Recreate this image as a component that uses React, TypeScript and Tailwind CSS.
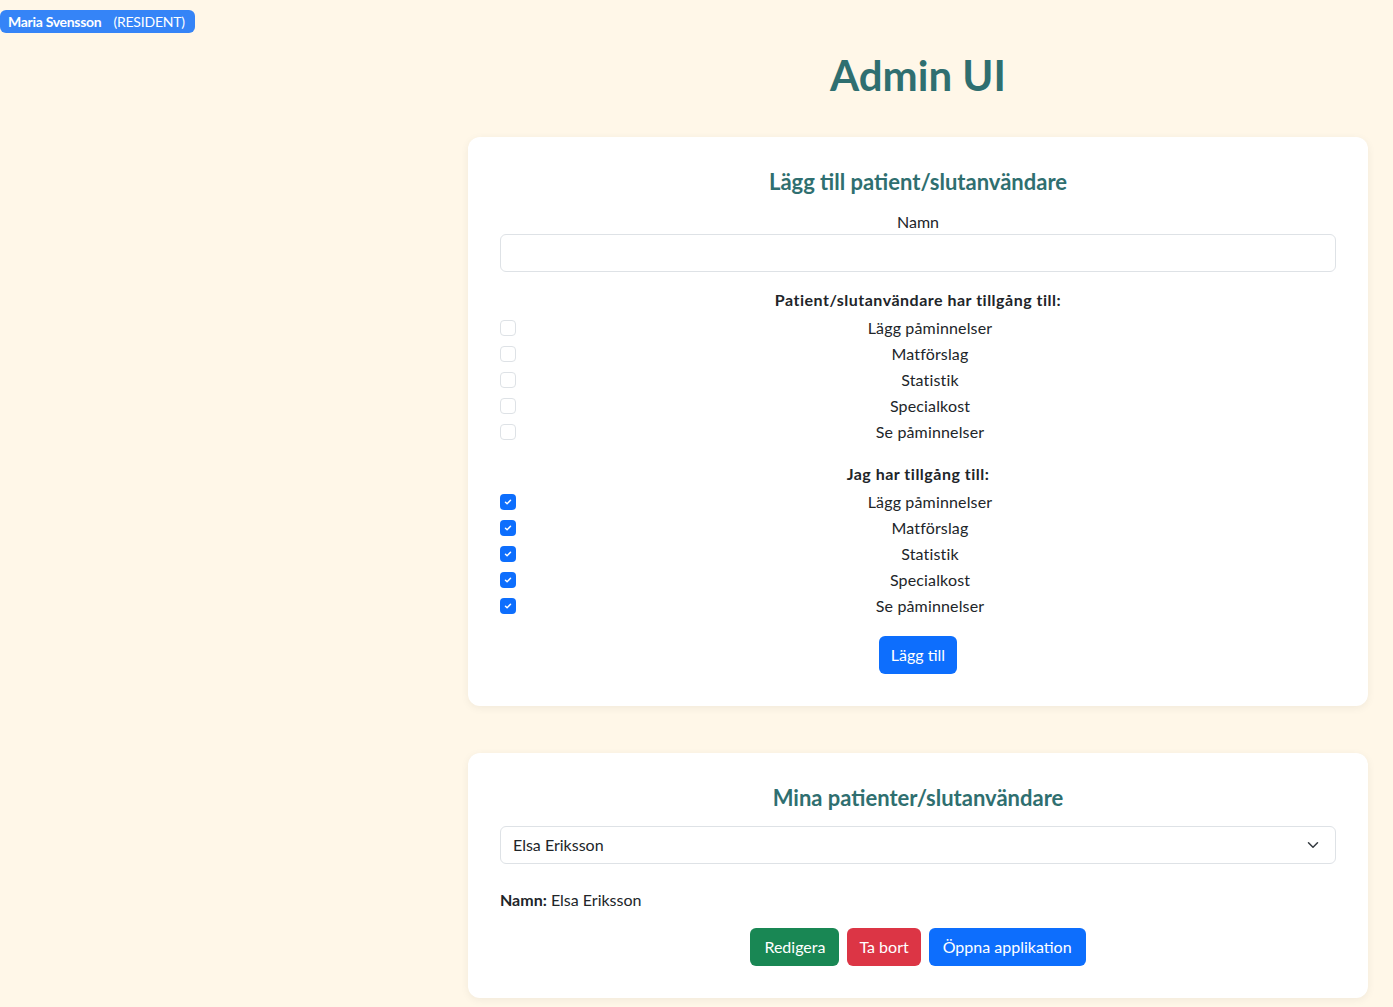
import React from 'react';

const features = ['Lägg påminnelser', 'Matförslag', 'Statistik', 'Specialkost', 'Se påminnelser'];

function Check({ checked }: { checked: boolean }) {
  if (!checked) {
    return <span className="w-4 h-4 shrink-0 rounded-[4px] border border-[#dee2e6] bg-white" />;
  }
  return (
    <span className="w-4 h-4 shrink-0 rounded-[4px] bg-[#0d6efd] flex items-center justify-center">
      <svg width="10" height="10" viewBox="0 0 20 20" fill="none">
        <path d="M5 10.5l3.2 3L15 6.5" stroke="#fff" strokeWidth="3" strokeLinecap="round" strokeLinejoin="round" />
      </svg>
    </span>
  );
}

function FeatureList({ checked }: { checked: boolean }) {
  return (
    <div className="flex flex-col">
      {features.map((f) => (
        <label key={f} className="h-[26px] flex items-center">
          <Check checked={checked} />
          <span className="flex-1 ml-2 text-center tracking-[0.15px]">{f}</span>
        </label>
      ))}
    </div>
  );
}

export default function App() {
  return (
    <div className="min-h-screen bg-[#fff7e8] flex text-[16px] leading-6 text-[#212529] font-['Lato','Liberation_Sans',sans-serif]">
      {/* sidomeny */}
      <div className="w-[443px] shrink-0 pt-[10px] flex flex-col items-start">
        <div className="flex items-center gap-[12px] h-[23px] pl-2 pr-[10px] rounded-[6px] bg-[#3584f7] text-white text-[14px]">
          <span className="font-bold tracking-[-0.3px]">Maria Svensson</span>
          <span className="tracking-[-0.2px]">(RESIDENT)</span>
        </div>
      </div>

      <main className="flex-1 px-[25px] pt-[48px] pb-[9px]">
        <h1 className="text-center text-[42px] leading-[54px] font-bold text-[#2f6f70] mb-[35px]">Admin UI</h1>

        <section className="bg-white rounded-[12px] shadow-[0_2px_8px_rgba(0,0,0,0.06)] px-8 pt-[30px] pb-8 flex flex-col">
          <h3 className="text-center text-[22px] leading-[29px] font-bold text-[#2f6f70]">Lägg till patient/slutanvändare</h3>
          <div className="text-center mt-[14px]">Namn</div>
          <input className="h-[38px] w-full rounded-[6px] border border-[#dee2e6] px-3 outline-none" />

          <div className="text-center font-bold tracking-[0.5px] mt-4 mb-[3px]">Patient/slutanvändare har tillgång till:</div>
          <FeatureList checked={false} />

          <div className="text-center font-bold tracking-[0.5px] mt-[17px] mb-[3px]">Jag har tillgång till:</div>
          <FeatureList checked={true} />

          <div className="flex justify-center mt-[17px]">
            <button className="h-[38px] px-3 rounded-[6px] bg-[#0d6efd] text-white">Lägg till</button>
          </div>
        </section>

        <section className="bg-white rounded-[12px] shadow-[0_2px_8px_rgba(0,0,0,0.06)] px-8 pt-[30px] pb-8 mt-[47px] flex flex-col">
          <h3 className="text-center text-[22px] leading-[29px] font-bold text-[#2f6f70]">Mina patienter/slutanvändare</h3>
          <div className="mt-[14px] h-[38px] rounded-[6px] border border-[#dee2e6] flex items-center justify-between pl-3 pr-4">
            <span>Elsa Eriksson</span>
            <svg width="12" height="12" viewBox="0 0 16 16" fill="none">
              <path d="M2 5l6 6 6-6" stroke="#343a40" strokeWidth="2" strokeLinecap="round" strokeLinejoin="round" />
            </svg>
          </div>
          <div className="mt-6">
            <span className="font-bold">Namn:</span> Elsa Eriksson
          </div>
          <div className="flex justify-center gap-2 mt-4">
            <button className="h-[38px] px-[14px] rounded-[6px] bg-[#198754] text-white">Redigera</button>
            <button className="h-[38px] px-[12px] rounded-[6px] bg-[#dc3545] text-white">Ta bort</button>
            <button className="h-[38px] px-[14px] rounded-[6px] bg-[#0d6efd] text-white">Öppna applikation</button>
          </div>
        </section>
      </main>
    </div>
  );
}
